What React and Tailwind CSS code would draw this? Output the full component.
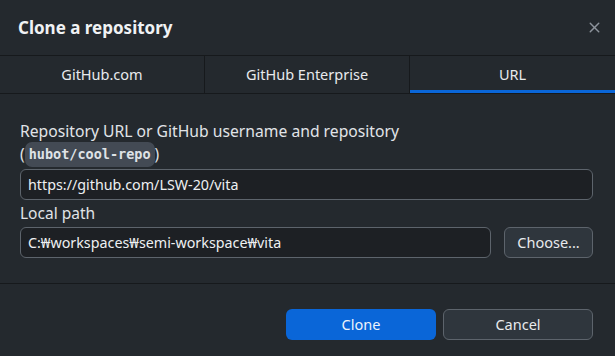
import { X } from "lucide-react";

function App() {
  const tabs = ["GitHub.com", "GitHub Enterprise", "URL"];
  const active = 2;

  return (
    <div
      className="w-[615px] h-[356px] bg-[#24292e] text-[#e1e4e8] flex flex-col overflow-hidden"
      style={{ fontFamily: '"Noto Sans", "Noto Sans CJK KR", sans-serif' }}
    >
      {/* Header */}
      <div className="h-[56px] flex items-center justify-between pl-[18px] pr-[12px] border-b border-[#16191c]">
        <h1 className="text-[17px] font-bold text-[#f0f2f4]">Clone a repository</h1>
        <X className="w-[17px] h-[17px] text-[#8d949c]" strokeWidth={2} />
      </div>

      {/* Tabs */}
      <div className="h-[38px] grid grid-cols-3 border-b border-[#16191c]">
        {tabs.map((t, i) => (
          <div
            key={t}
            className={`relative flex items-center justify-center text-[14.5px] text-[#e8eaed] ${
              i < tabs.length - 1 ? "border-r border-[#16191c]" : ""
            }`}
          >
            {t}
            {i === active && (
              <div className="absolute left-0 right-0 bottom-0 h-[3px] bg-[#0a66d8]" />
            )}
          </div>
        ))}
      </div>

      {/* Content */}
      <div className="flex-1 px-[20px] pr-[22px] pt-[26px] border-b border-[#16191c]">
        <div className="text-[15.7px] leading-[22px]">
          Repository URL or GitHub username and repository
        </div>
        <div className="text-[15.5px] leading-[25px] flex items-center">
          (
          <span
            className="bg-[#434a54] rounded-[7px] px-[4px] h-[25px] flex items-center text-[13.5px] font-bold text-[#dfe2e6]"
            style={{ fontFamily: '"DejaVu Sans Mono", monospace' }}
          >
            hubot/cool-repo
          </span>
          )
        </div>
        <div className="mt-[2px] h-[31px] rounded-[6px] border border-[#5d646c] bg-[#1d2024] flex items-center px-[7px] text-[14.3px] text-[#eef0f2]">
          https://github.com/LSW-20/vita
        </div>
        <div className="text-[15.5px] leading-[26px]">Local path</div>
        <div className="mt-[1px] flex gap-[13px]">
          <div className="flex-1 h-[31px] rounded-[6px] border border-[#5d646c] bg-[#1d2024] flex items-center px-[7px] text-[14.3px] text-[#eef0f2]">
            C:₩workspaces₩semi-workspace₩vita
          </div>
          <button className="w-[89px] h-[31px] rounded-[6px] border border-[#5d646c] bg-[#2f363d] text-[14.5px] text-[#e8eaed]">
            Choose...
          </button>
        </div>
      </div>

      {/* Footer */}
      <div className="h-[72px] flex items-start justify-end gap-[7px] pt-[25px] pr-[22px]">
        <button className="w-[150px] h-[31px] rounded-[6px] bg-[#0a66d8] text-[14.5px] text-[#eef3fb]">
          Clone
        </button>
        <button className="w-[150px] h-[31px] rounded-[6px] border border-[#5d646c] bg-[#2f363d] text-[14.5px] text-[#e8eaed]">
          Cancel
        </button>
      </div>
    </div>
  );
}

export default App;
